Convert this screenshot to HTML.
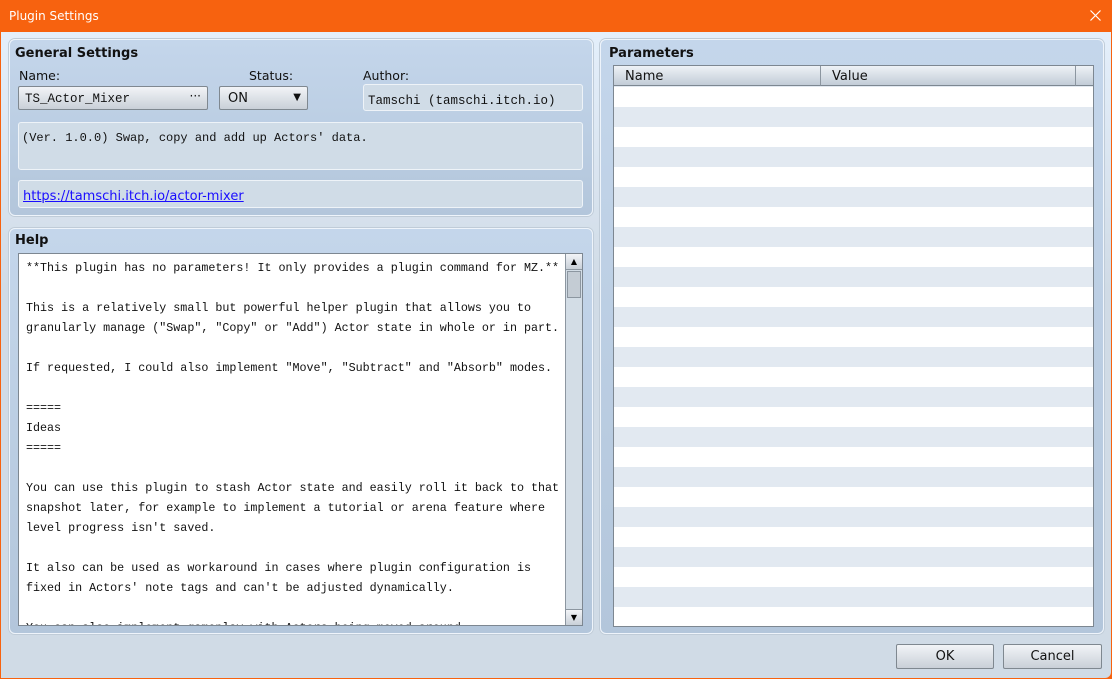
<!DOCTYPE html>
<html><head><style>
*{box-sizing:border-box;margin:0;padding:0}
body{width:1112px;height:679px;overflow:hidden;background:#f7620f;font-family:"DejaVu Sans","Liberation Sans",sans-serif;position:relative}
.title{position:absolute;left:0;top:0;width:1112px;height:32px;background:#f7620f;color:#fff;font-size:12px;padding:9px 0 0 9px}
.close{position:absolute;left:1090px;top:10px}
.win{position:absolute;left:1px;top:32px;width:1110px;height:646px;background:linear-gradient(#e4effb,#d0dbe6 40%,#d0dbe6);border-radius:0 0 6px 0}
.panel{position:absolute;background:linear-gradient(#c4d6eb,#b3c6db);border:1px solid #eef4fb;border-radius:6px;box-shadow:0 0 0 1px #c0ccd8}
.h{position:absolute;font-weight:bold;font-size:13px;color:#111}
.lbl{position:absolute;font-size:12.5px;color:#111}
.box{position:absolute;background:#d0dce7;border:1px solid #eef3f8;border-radius:3px}
.mono{font-family:"Liberation Mono","DejaVu Sans Mono",monospace;font-size:11.7px;color:#111}
.btn{position:absolute;background:linear-gradient(#f2f4f7,#c9d0d8);border:1px solid #7f8890;border-radius:2px;font-size:13px;color:#111;text-align:center}
.help{position:absolute;left:17px;top:221px;width:565px;height:373px;background:#fff;border:1px solid #7d8791;overflow:hidden}
.help pre{position:absolute;left:7px;top:4px;line-height:20px;white-space:pre}
.sb{position:absolute;right:0;top:0;width:17px;height:100%;background:#d3dde6;border-left:1px solid #8c96a0}
.table{position:absolute;left:612px;top:33px;width:481px;height:562px;border:1px solid #7d8791;background:repeating-linear-gradient(#fff 0 20px,#e2e9f1 20px 40px);background-position:0 21px;overflow:hidden}
.th{position:absolute;left:0;top:0;height:20px;background:linear-gradient(#eef2f6,#c2ccd7);border-bottom:1px solid #7d8791;font-size:13px;color:#111;padding:3px 0 0 11px}
</style></head><body>
<div class="title">Plugin Settings<svg class="close" width="11" height="11" viewBox="0 0 11 11"><path d="M0.5 0.5L10.5 10.5M10.5 0.5L0.5 10.5" stroke="#fff" stroke-width="1.2"/></svg></div>
<div class="win">
 <div class="panel" style="left:8px;top:7px;width:584px;height:177px"></div>
 <div class="h" style="left:14px;top:14px">General Settings</div>
 <div class="lbl" style="left:18px;top:36px">Name:</div>
 <div class="lbl" style="left:248px;top:36px">Status:</div>
 <div class="lbl" style="left:362px;top:36px">Author:</div>
 <div class="btn" style="left:17px;top:54px;width:190px;height:24px;text-align:left;padding:4px 0 0 6px"><span class="mono" style="font-size:12.5px">TS_Actor_Mixer</span><span style="position:absolute;right:6px;top:2px;font-size:12px">···</span></div>
 <div class="btn" style="left:218px;top:54px;width:89px;height:24px;text-align:left;padding:4px 0 0 8px">ON<span style="position:absolute;right:6px;top:5px;font-size:10px">▼</span></div>
 <div class="box" style="left:362px;top:52px;width:220px;height:27px;padding:4px 0 0 4px"><span class="mono" style="font-size:12.5px">Tamschi (tamschi.itch.io)</span></div>
 <div class="box" style="left:17px;top:90px;width:565px;height:48px;padding:3px 0 0 3px"><span class="mono" style="font-size:12px">(Ver. 1.0.0) Swap, copy and add up Actors' data.</span></div>
 <div class="box" style="left:17px;top:148px;width:565px;height:28px;padding:4px 0 0 4px"><span style="font-size:13px;color:#1a0dff;text-decoration:underline">https://tamschi.itch.io/actor-mixer</span></div>

 <div class="panel" style="left:8px;top:196px;width:584px;height:406px"></div>
 <div class="h" style="left:14px;top:201px">Help</div>
 <div class="help"><pre class="mono">**This plugin has no parameters! It only provides a plugin command for MZ.**

This is a relatively small but powerful helper plugin that allows you to
granularly manage ("Swap", "Copy" or "Add") Actor state in whole or in part.

If requested, I could also implement "Move", "Subtract" and "Absorb" modes.

=====
Ideas
=====

You can use this plugin to stash Actor state and easily roll it back to that
snapshot later, for example to implement a tutorial or arena feature where
level progress isn't saved.

It also can be used as workaround in cases where plugin configuration is
fixed in Actors' note tags and can't be adjusted dynamically.

You can also implement gameplay with Actors being moved around...</pre>
  <div class="sb">
   <div style="position:absolute;left:0;top:0;width:16px;height:16px;background:linear-gradient(#f2f4f7,#c9d0d8);border-bottom:1px solid #8c96a0;font-size:8px;text-align:center;line-height:16px">▲</div>
   <div style="position:absolute;left:1px;top:17px;width:14px;height:27px;background:#c4ccd4;border:1px solid #8c96a0"></div>
   <div style="position:absolute;left:0;bottom:0;width:16px;height:16px;background:linear-gradient(#f2f4f7,#c9d0d8);border-top:1px solid #8c96a0;font-size:8px;text-align:center;line-height:16px">▼</div>
  </div>
 </div>

 <div class="panel" style="left:599px;top:7px;width:504px;height:595px"></div>
 <div class="h" style="left:608px;top:14px">Parameters</div>
 <div class="table">
  <div class="th" style="width:207px;border-right:1px solid #8c96a0">Name</div>
  <div class="th" style="left:207px;width:255px;border-right:1px solid #8c96a0">Value</div>
  <div class="th" style="left:462px;width:19px;padding:0"></div>
 </div>

 <div class="btn" style="left:895px;top:612px;width:98px;height:25px;padding-top:4px">OK</div>
 <div class="btn" style="left:1002px;top:612px;width:99px;height:25px;padding-top:4px">Cancel</div>
</div>
</body></html>
